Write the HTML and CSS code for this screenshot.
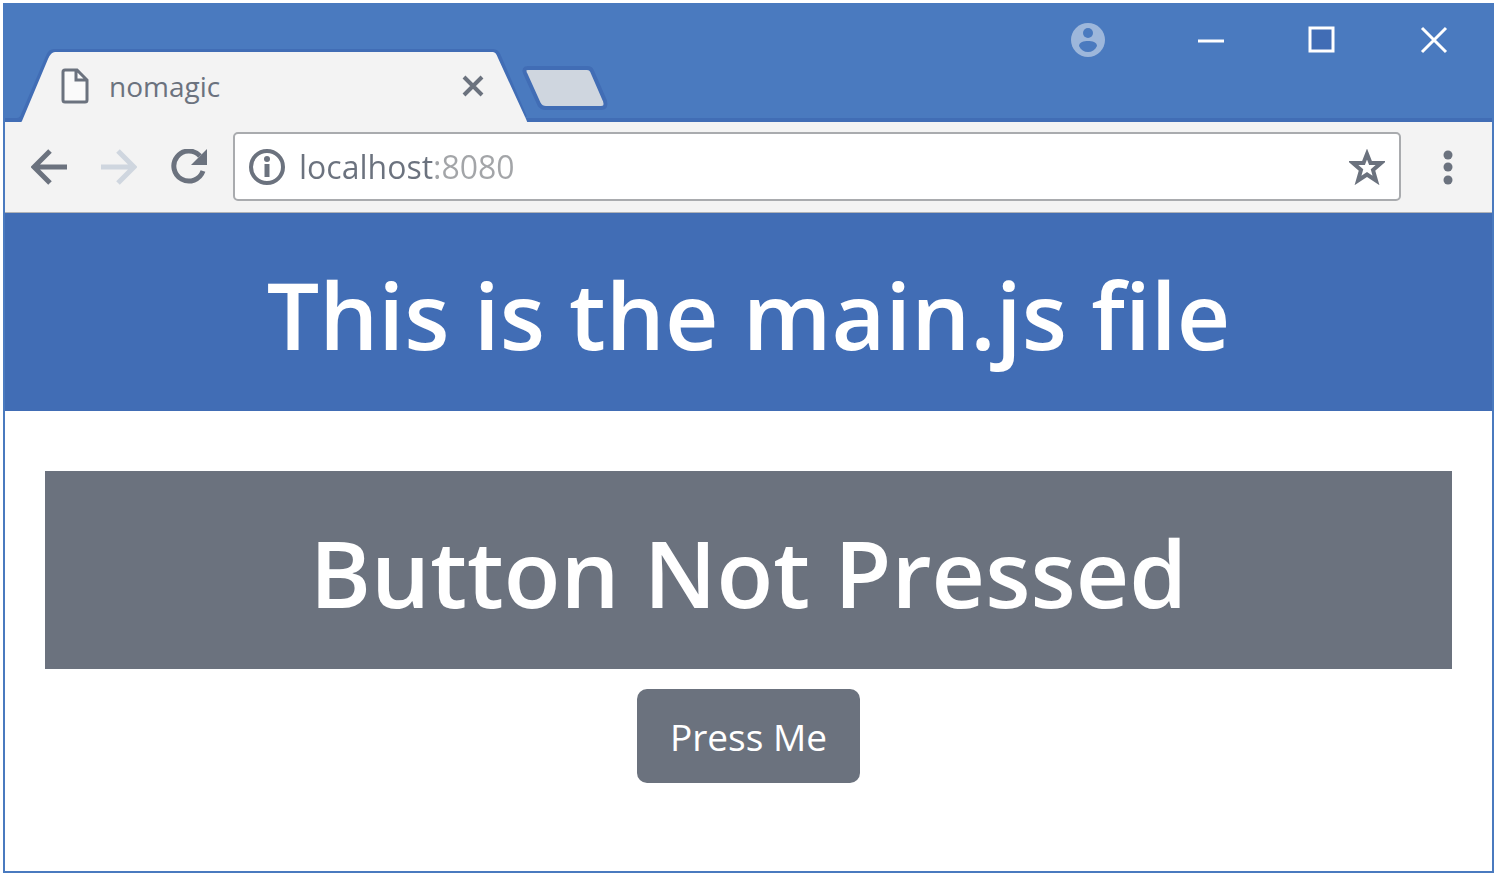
FILE: index.html
```html
<!DOCTYPE html>
<html lang="en">
<head>
<meta charset="utf-8">
<title>nomagic</title>
<link rel="stylesheet" href="styles.css">
</head>
<body>
<div class="window">
  <div class="titlebar">
    <div class="tab">
      <svg class="tab-shape" viewBox="0 0 516 74" aria-hidden="true">
        <path d="M0 70H12Q15 70 17 67L43 6Q45 1 49 1H488Q492 1 494 6L520 67" fill="none" stroke="#416db5" stroke-width="4"/>
        <path d="M15 74L17 71L43 9Q46 2 50 2H488Q491 2 493 8L521 69L523 74Z" fill="#f3f3f3"/>
      </svg>
      <svg class="page-icon" viewBox="0 0 28 36" aria-hidden="true">
        <path d="M4 2H16L26 12V32Q26 34 24 34H4Q2 34 2 32V4Q2 2 4 2Z" fill="#fafafa"/>
        <path d="M4 2H16L26 12V32Q26 34 24 34H4Q2 34 2 32V4Q2 2 4 2ZM15 2V12H26" fill="none" stroke="#6b727e" stroke-width="3"/>
      </svg>
      <span class="tab-title">nomagic</span>
      <button class="icon-button tab-close" aria-label="Close tab">
        <svg width="22" height="22" viewBox="0 0 22 22"><path d="M2 2L20 20M20 2L2 20" stroke="#6b727e" stroke-width="4"/></svg>
      </button>
    </div>
    <button class="icon-button new-tab" aria-label="New tab">
      <svg width="88" height="46" viewBox="0 0 88 46"><path d="M7 2H66Q70 2 71 5L84 35Q86 42 80 42H25Q20 42 18 38L4 7Q2 2 7 2Z" fill="#cfd6df" stroke="#416db5" stroke-width="4"/></svg>
    </button>
    <div class="window-controls">
      <button class="icon-button profile" aria-label="Profile">
        <svg width="36" height="36" viewBox="0 0 36 36"><circle cx="18" cy="18" r="17" fill="#9db7db"/><circle cx="18" cy="11" r="5" fill="#4a7abf"/><path d="M9 24C9 20 14 19 18 19S27 20 27 24C25 28 22 30 18 30S11 28 9 24Z" fill="#4a7abf"/></svg>
      </button>
      <button class="icon-button" aria-label="Minimize">
        <svg width="26" height="28" viewBox="0 0 26 28"><path d="M0 15H26" stroke="#fff" stroke-width="3"/></svg>
      </button>
      <button class="icon-button" aria-label="Maximize">
        <svg width="28" height="28" viewBox="0 0 28 28"><rect x="2" y="2" width="23" height="23" fill="#416db5" stroke="#fff" stroke-width="3"/></svg>
      </button>
      <button class="icon-button" aria-label="Close window">
        <svg width="28" height="28" viewBox="0 0 28 28"><path d="M2 2L26 26M26 2L2 26" stroke="#fff" stroke-width="3"/></svg>
      </button>
    </div>
  </div>
  <div class="toolbar">
    <nav class="history">
      <button class="icon-button" aria-label="Back">
        <svg width="36" height="36" viewBox="0 0 36 36"><path d="M36 18H3M19 2L3 18L19 34" fill="none" stroke="#6b727e" stroke-width="5"/></svg>
      </button>
      <button class="icon-button" aria-label="Forward" disabled>
        <svg width="36" height="36" viewBox="0 0 36 36"><path d="M0 18H33M17 2L33 18L17 34" fill="none" stroke="#cfd6df" stroke-width="5"/></svg>
      </button>
      <button class="icon-button" aria-label="Reload">
        <svg width="36" height="36" viewBox="0 0 36 36"><path d="M29 7A15 15 0 1 0 32 22" fill="none" stroke="#6b727e" stroke-width="5"/><path d="M36 0V16H20Z" fill="#6b727e"/></svg>
      </button>
    </nav>
    <form class="address">
      <svg width="36" height="36" viewBox="0 0 36 36" aria-hidden="true"><circle cx="18" cy="18" r="16" fill="none" stroke="#6b727e" stroke-width="4"/><circle cx="18" cy="10" r="3" fill="#6b727e"/><path d="M18 15V28" stroke="#6b727e" stroke-width="5"/></svg>
      <input class="url" type="text" aria-label="Address" value="localhost:8080">
      <button class="icon-button" type="button" aria-label="Bookmark this page">
        <svg width="36" height="36" viewBox="0 0 36 36"><path d="M18 5L21.500 14H32L24 21L27 31.500L18 25.500L9 31.500L12 21L4 14H14.500Z" fill="#fff" stroke="#6b727e" stroke-width="4"/></svg>
      </button>
    </form>
    <button class="icon-button menu" aria-label="Menu">
      <svg width="10" height="36" viewBox="0 0 10 36"><g fill="#6b727e"><circle cx="5" cy="6" r="4.500"/><circle cx="5" cy="18" r="4.500"/><circle cx="5" cy="31" r="4.500"/></g></svg>
    </button>
  </div>
  <main class="page">
    <h1 class="banner">This is the main.js file</h1>
    <div class="content">
      <h2 class="status">Button Not Pressed</h2>
      <button class="press">Press Me</button>
    </div>
  </main>
</div>
</body>
</html>
```
FILE: styles.css
```css
* { box-sizing: border-box; }

body {
  margin: 0;
  padding: 3px 5px 5px 3px;
  min-height: 100vh;
  display: flex;
  background: #fff;
  font-family: "Open Sans", "Noto Sans", sans-serif;
}

.window {
  flex: 1;
  min-width: 0;
  display: flex;
  flex-direction: column;
  border: 2px solid #4a7abf;
}

.icon-button {
  display: flex;
  flex: none;
  padding: 0;
  border: 0;
  background: none;
}

.icon-button svg { display: block; }

.titlebar {
  display: flex;
  align-items: flex-end;
  height: 117px;
  background: linear-gradient(#416db5, #416db5) bottom / 100% 4px no-repeat #4a7abf;
}

.tab {
  position: relative;
  display: flex;
  align-items: center;
  flex: none;
  width: 516px;
  height: 72px;
  padding: 0 37px 0 56px;
}

.tab-shape {
  position: absolute;
  inset: 0;
  width: 100%;
  height: 74px;
  overflow: visible;
}

.page-icon {
  position: relative;
  width: 28px;
  height: 36px;
}

.tab-title {
  position: relative;
  flex: 1;
  margin-left: 20px;
  font-size: 28px;
  font-weight: 500;
  line-height: 36px;
  color: #6b727e;
}

.tab-close { position: relative; }

.new-tab { margin-bottom: 10px; }

.window-controls {
  display: flex;
  align-items: center;
  align-self: flex-start;
  gap: 84px;
  margin-left: auto;
  padding: 17px 44px 0 0;
}

.profile { margin-right: 8px; }

.toolbar {
  display: flex;
  align-items: center;
  gap: 26px;
  padding: 10px 39px 11px 26px;
  background: #f3f3f3;
  border-bottom: 1px solid #b0b3b8;
}

.history {
  display: flex;
  gap: 34px;
}

.address {
  flex: 1;
  min-width: 0;
  display: flex;
  align-items: center;
  gap: 14px;
  height: 69px;
  padding: 0 14px;
  background: #fff;
  border: 2px solid #a9abae;
  border-radius: 5px;
}

.url {
  flex: 1;
  min-width: 0;
  padding: 0;
  border: 0;
  outline: 0;
  font: 500 32px/44px "Open Sans", "Noto Sans", sans-serif;
  color: transparent;
  background: linear-gradient(to right, #6b727e 136px, #a3a5a8 136px);
  -webkit-background-clip: text;
  background-clip: text;
}

.menu { margin-left: 16px; }

.page {
  flex: 1;
  background: #fff;
}

.banner,
.status {
  margin: 0;
  padding: 32px 30px 28px;
  font-size: 93px;
  font-weight: 600;
  line-height: 138px;
  text-align: center;
  color: #fff;
}

.banner { background: #416db5; }

.content {
  display: flex;
  flex-direction: column;
  align-items: center;
  gap: 20px;
  padding: 60px 40px;
}

.status {
  align-self: stretch;
  background: #6b727e;
}

.press {
  padding: 23px 33px 21px;
  border: 0;
  border-radius: 10px;
  font: 37px/50px "Open Sans", "Noto Sans", sans-serif;
  color: #fff;
  background: #6b727e;
}
```
